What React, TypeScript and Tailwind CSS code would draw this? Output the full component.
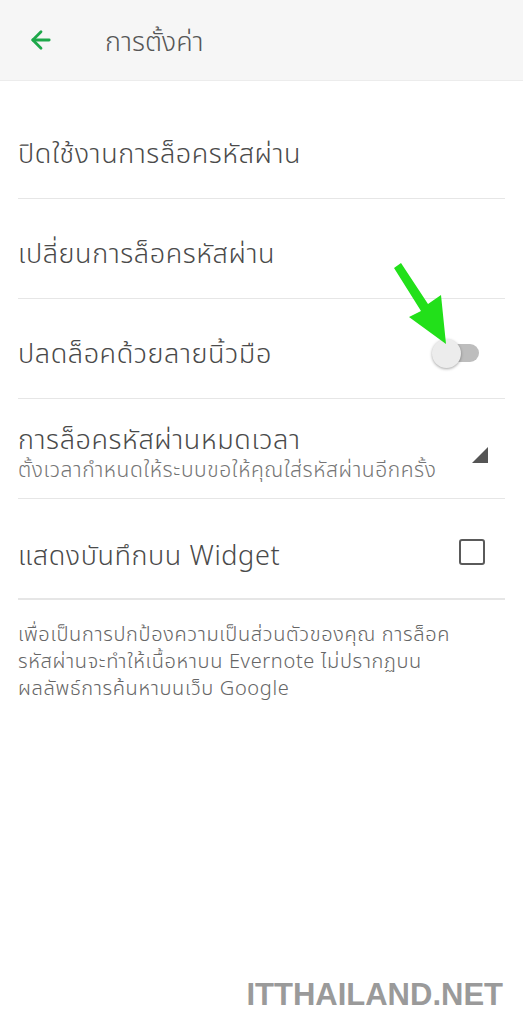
import { ArrowLeft } from 'lucide-react';

const thai = { fontFamily: '"Noto Sans", "Noto Sans Thai", "Liberation Sans", sans-serif' };

function Row({ children, last }: { children: React.ReactNode; last?: boolean }) {
  return (
    <div className={last ? 'flex h-[100px] items-center' : 'flex h-[100px] items-center border-b border-[#e6e6e6]'}>
      {children}
    </div>
  );
}

export default function App() {
  return (
    <div className="relative flex h-[1024px] w-[523px] flex-col bg-white text-[#4a4a4a]" style={thai}>
      <header className="flex h-[81px] items-center border-b border-[#ececec] bg-[#f6f6f6] pl-[27px]">
        <ArrowLeft className="h-[28px] w-[28px] text-[#1ea84a]" strokeWidth={2.4} />
        <span className="mt-[2px] ml-[50px] text-[27px] font-light text-[#555]">การตั้งค่า</span>
      </header>

      <div className="mt-[18px] px-[18px]">
        <Row>
          <span className="mt-[10px] text-[27px] font-light tracking-[0.6px]">ปิดใช้งานการล็อครหัสผ่าน</span>
        </Row>
        <Row>
          <span className="mt-[10px] text-[27px] font-light tracking-[0.6px]">เปลี่ยนการล็อครหัสผ่าน</span>
        </Row>
        <Row>
          <span className="mt-[10px] flex-1 text-[27px] font-light tracking-[0.6px]">ปลดล็อคด้วยลายนิ้วมือ</span>
          <div className="relative mt-[8px] mr-[26px] h-[18px] w-[40px] rounded-full bg-[#bdbdbd]">
            <div className="absolute -top-[5px] -left-[7px] h-[29px] w-[29px] rounded-full bg-[#ececec] shadow-[0_1px_3px_rgba(0,0,0,0.35)]" />
          </div>
        </Row>
        <Row>
          <div className="mt-[9px] flex-1">
            <div className="text-[27px] leading-[32px] font-light tracking-[0.6px]">การล็อครหัสผ่านหมดเวลา</div>
            <div className="text-[21px] leading-[28px] font-light tracking-[0.6px] text-[#757575]">ตั้งเวลากำหนดให้ระบบขอให้คุณใส่รหัสผ่านอีกครั้ง</div>
          </div>
          <svg width="16" height="16" viewBox="0 0 16 16" className="mr-[17px] mt-[12px]">
            <path d="M16 0 L16 16 L0 16 Z" fill="#555" />
          </svg>
        </Row>
        <Row>
          <span className="mt-[13px] flex-1 text-[27px] font-light tracking-[0.6px]">แสดงบันทึกบน Widget</span>
          <div className="mt-[6px] mr-[20px] h-[26px] w-[26px] rounded-[3px] border-[2.5px] border-[#5a5a5a]" />
        </Row>
        <div className="border-t border-[#e6e6e6] pt-[20px] text-[20px] leading-[27px] font-light tracking-[0.65px] text-[#666]">
          เพื่อเป็นการปกป้องความเป็นส่วนตัวของคุณ การล็อค
          <br />
          รหัสผ่านจะทำให้เนื้อหาบน Evernote ไม่ปรากฏบน
          <br />
          ผลลัพธ์การค้นหาบนเว็บ Google
        </div>
      </div>

      <svg className="absolute left-[390px] top-[262px]" width="62" height="84" viewBox="0 0 62 84">
        <path d="M4 6 L11 1 L38 42 L51 33 L56 82 L19 55 L31 49 Z" fill="#22e01a" />
      </svg>

      <div className="mt-auto mb-[6px] mr-[20px] text-right">
        <span
          className="text-[31px] font-bold text-[#9a9a9a]"
          style={{ fontFamily: '"Liberation Sans", Arial, sans-serif' }}
        >
          ITTHAILAND.NET
        </span>
      </div>
    </div>
  );
}
